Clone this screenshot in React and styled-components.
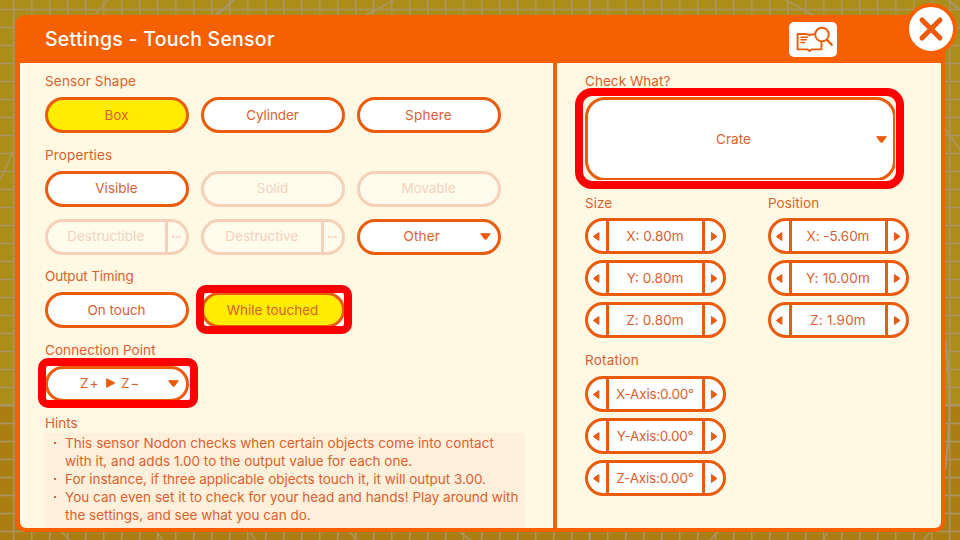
import React from "react";
import styled, { createGlobalStyle, css } from "styled-components";

const C = {
  orange: "#f76000",
  line: "#ea5b0c",
  text: "#dc602e",
  cream: "#fff9e3",
  yellow: "#ffec00",
  faint: "#f7d0b8",
  red: "#ff0000",
};

const GlobalStyle = createGlobalStyle`
  * { box-sizing: border-box; }
  body { margin: 0; overflow: hidden; }
`;

const Screen = styled.main`
  position: relative;
  width: 960px;
  height: 540px;
  padding: 15px 15px 8px;
  overflow: hidden;
  font: 400 13.5px/20px Inter, sans-serif;
  color: ${C.text};
  background: linear-gradient(#ab8e1a 0 405px, #ab7e14 405px);
`;

const GridArt = styled.svg`
  position: absolute;
  inset: 0;
`;

const Panel = styled.section`
  position: relative;
  display: flex;
  flex-direction: column;
  width: 930px;
  height: 517px;
  padding: 0 4.5px 4px;
  border-radius: 10px;
  background: ${C.orange};
`;

const Header = styled.header`
  display: flex;
  align-items: center;
  justify-content: space-between;
  height: 48px;
  padding: 0 103.5px 0 25.5px;
`;

const Title = styled.h1`
  margin: 0;
  font-size: 19.5px;
  font-weight: 450;
  letter-spacing: 0.25px;
  color: #fff;
`;

const GuideButton = styled.button`
  display: block;
  width: 48px;
  height: 35px;
  padding: 0;
  border: 0;
  border-radius: 5px;
  background: #fff;
`;

const CloseButton = styled.button`
  position: absolute;
  top: -12px;
  right: -12px;
  display: grid;
  place-items: center;
  width: 52px;
  height: 52px;
  padding: 0;
  border: 4px solid ${C.orange};
  border-radius: 50%;
  background: #fff;
`;

const Body = styled.div`
  display: grid;
  grid-template-columns: 533.5px 1fr;
  column-gap: 4px;
  flex: 1;
  border-radius: 0 0 6px 6px;
  overflow: hidden;
`;

const Column = styled.div`
  display: flex;
  flex-direction: column;
  padding: 8px 0 0 ${(p) => p.$inset}px;
  background: ${C.cream};
`;

const Section = styled.section`
  flex: none;
  width: ${(p) => (p.$width ? `${p.$width}px` : "auto")};
  height: ${(p) => (p.$height ? `${p.$height}px` : "auto")};
`;

const Heading = styled.h2`
  margin: 0;
  height: ${(p) => p.$height || 26}px;
  font-size: inherit;
  font-weight: 400;
  line-height: 20px;
  white-space: nowrap;
  letter-spacing: ${(p) => p.$track || 0}px;
`;

const Options = styled.div`
  display: grid;
  grid-template-columns: repeat(3, 144px);
  grid-auto-rows: 36px;
  gap: 12px;
`;

const tone = css`
  color: ${(p) => (p.$disabled ? C.faint : C.text)};
  background: ${(p) => (p.$disabled ? "#fffcee" : p.$selected ? C.yellow : "#fff")};
  border: 3px solid ${(p) => (p.$disabled ? C.faint : C.line)};
`;

const Pill = styled.button`
  ${tone}
  display: flex;
  align-items: center;
  width: 100%;
  height: ${(p) => (p.$tall ? 84 : 36)}px;
  padding: 0;
  border-radius: ${(p) => (p.$tall ? 20 : 18)}px;
  font: inherit;
  letter-spacing: ${(p) => p.$track || 0}px;
  white-space: nowrap;
`;

const PillText = styled.span`
  flex: 1;
  display: flex;
  align-items: center;
  justify-content: center;
  gap: 6px;
  padding: 0 ${(p) => (p.$inset ? 0 : 1)}px 1px ${(p) => p.$inset || 0}px;
`;

const CaretSlot = styled.span`
  display: flex;
  flex: none;
  width: ${(p) => p.$width}px;
`;

const MoreSlot = styled.span`
  display: grid;
  place-items: center;
  flex: none;
  align-self: stretch;
  width: 21.5px;
  border-left: 3px solid ${C.faint};
`;

const Highlight = styled.div`
  position: relative;
  isolation: isolate;
  width: ${(p) => p.$width}px;

  &::before,
  &::after {
    content: "";
    position: absolute;
    inset: ${(p) => p.$offset};
    border-radius: ${(p) => p.$radius}px;
  }
  &::before {
    z-index: -1;
    background: ${(p) => (p.$large ? C.cream : "#fff")};
  }
  &::after {
    border: 8px solid ${C.red};
    box-shadow: ${(p) => (p.$large ? "inset 0 0 0 1px #fff" : "none")};
  }
`;

const HintList = styled.ul`
  width: 480px;
  height: 95px;
  margin: 0;
  padding: 1px 0 0 20px;
  list-style: none;
  line-height: 18px;
  background: #fff0dc;
`;

const Hint = styled.li`
  display: flex;
  flex-direction: column;
  position: relative;

  &::before {
    content: "";
    position: absolute;
    left: -11px;
    top: 8px;
    width: 2px;
    height: 2px;
    background: ${C.text};
  }
`;

const HintLine = styled.span`
  white-space: nowrap;
  letter-spacing: ${(p) => p.$track || 0}px;
`;

const Vectors = styled.div`
  display: flex;
  gap: 42px;
  margin-bottom: 12px;
`;

const Stack = styled.div`
  display: grid;
  gap: 6px;
`;

const StepperFrame = styled.div`
  ${tone}
  display: grid;
  grid-template-columns: 18px 99px 18px;
  align-items: stretch;
  width: 141px;
  height: 36px;
  border-radius: 18px;
`;

const StepButton = styled.button`
  display: grid;
  place-items: center;
  padding: 0;
  border: 0;
  background: none;
`;

const StepValue = styled.span`
  display: grid;
  place-items: center;
  padding-right: 1px;
  border: solid ${C.line};
  border-width: 0 3px;
  letter-spacing: ${(p) => p.$track || 0}px;
  white-space: nowrap;
`;

const Shape = styled.svg`
  display: block;
  flex: none;
  overflow: visible;
`;

const Caret = () => (
  <Shape width="11" height="7" fill={C.line} stroke={C.line} strokeWidth="1" strokeLinejoin="round">
    <path d="M.7.7h9.6L6.2 6.3H4.8z" />
  </Shape>
);

const Play = () => (
  <Shape width="9" height="10" fill={C.line} stroke={C.line} strokeLinejoin="round">
    <path d="M.7.8v8.4L8.3 5.3v-.6z" />
  </Shape>
);

const Arrow = ({ next }) => (
  <Shape width="6" height="9" fill={C.line} stroke={C.line} strokeLinejoin="round">
    <path d={next ? "M.4.5v8L5.5 4.9v-.8z" : "M4.9.5v8L-.2 4.9v-.8z"} />
  </Shape>
);

const Dots = () => (
  <Shape width="9" height="2" fill={C.faint}>
    <path d="M0 0h2v2H0zM3.3 0h2v2h-2zM6.6 0h2v2h-2z" />
  </Shape>
);

const Choice = ({ children, more, caret, inset, ...rest }) => (
  <Pill {...rest}>
    <PillText $inset={inset}>{children}</PillText>
    {more && <MoreSlot><Dots /></MoreSlot>}
    {caret && <CaretSlot $width={caret}><Caret /></CaretSlot>}
  </Pill>
);

const Stepper = ({ value, track }) => (
  <StepperFrame>
    <StepButton aria-label="Decrease"><Arrow /></StepButton>
    <StepValue $track={track}>{value}</StepValue>
    <StepButton aria-label="Increase"><Arrow next /></StepButton>
  </StepperFrame>
);

const VectorGroup = ({ label, track, items, head = 25 }) => (
  <Section $width={141}>
    <Heading $track={track} $height={head}>{label}</Heading>
    <Stack>
      {items.map(([value, t]) => <Stepper key={value} value={value} track={t} />)}
    </Stack>
  </Section>
);

const size = [["X: 0.80m", 0], ["Y: 0.80m", 0], ["Z: 0.80m", 0.1]];
const position = [["X: -5.60m", -0.05], ["Y: 10.00m", 0.2], ["Z: 1.90m", 0.2]];
const rotation = [["X-Axis:0.00°", -0.2], ["Y-Axis:0.00°", -0.25], ["Z-Axis:0.00°", -0.18]];

const range = (start, end) => {
  const out = [];
  for (let v = start; v < end; v += 18) out.push(v);
  return out;
};

const Backdrop = () => (
  <GridArt width="960" height="540" fill="none" stroke="#aa9565" strokeWidth="1.5">
    {range(13.7, 960).map((x) => <path key={x} d={`M${x} 0V540`} />)}
    {range(9.4, 540).map((y) => <path key={y} d={`M0 ${y}H960`} />)}
    <path strokeWidth="2.4" d="M0 405.3H960M589.7 0V540M216 15L234 0M945 -3L962 12M945 340Q954 400 945 470" />
    <path d="M95 15L108 0M366 15L394 0M786 0L813 15M945 129L960 150M0 180L13 152M62 532L70 541M157 532L163 541M250 532L256 541M350 532L357 541M459 532L472 541M709 541L718 532M823 541L828 532M923 541L930 532" />
  </GridArt>
);

export default function App() {
  return (
    <Screen>
      <GlobalStyle />
      <Backdrop />
      <Panel>
        <Header>
          <Title>Settings - Touch Sensor</Title>
          <GuideButton aria-label="Guide">
            <Shape width="48" height="35" fill="none" stroke={C.line} strokeWidth="1.9" strokeLinejoin="round" strokeLinecap="round">
              <path d="M25.6 12.2c-2.1-.1-4 .3-5 1.2-1-1-2.6-1.4-4.8-1.4H8.6v15.4H18.6l2 1.6 2-1.6h9.8V20.5" />
              <path d="M12 15.2h6.4M12 17.8h5.4M12 20.4h3.6" strokeWidth="1.5" />
              <circle cx="33" cy="12.6" r="6.8" />
              <path d="M38 17.8l4.7 5" strokeWidth="2.3" />
            </Shape>
          </GuideButton>
        </Header>
        <Body>
          <Column $inset={25.5}>
            <Section $height={73.5}>
              <Heading $track={0.18}>Sensor Shape</Heading>
              <Options>
                <Choice $selected>Box</Choice>
                <Choice $track={-0.1}>Cylinder</Choice>
                <Choice $track={0.25}>Sphere</Choice>
              </Options>
            </Section>
            <Section $height={121.5}>
              <Heading $track={0.15}>Properties</Heading>
              <Options>
                <Choice>Visible</Choice>
                <Choice $disabled>Solid</Choice>
                <Choice $disabled $track={-0.1}>Movable</Choice>
                <Choice $disabled more>Destructible</Choice>
                <Choice $disabled more>Destructive</Choice>
                <Choice caret={18.5} inset={4} $track={0.15}>Other</Choice>
              </Options>
            </Section>
            <Section $height={73.5}>
              <Heading $track={-0.15}>Output Timing</Heading>
              <Options>
                <Choice>On touch</Choice>
                <Highlight $width={144} $offset="-7px -7px -6px -5px" $radius={10}>
                  <Choice $selected>While touched</Choice>
                </Highlight>
              </Options>
            </Section>
            <Section $height={73.5}>
              <Heading $track={0.08}>Connection Point</Heading>
              <Highlight $width={144} $offset="-7.5px -9px -6.5px -7px" $radius={10}>
                <Choice caret={18} inset={5} $track={1.5}>Z+ <Play /> Z−</Choice>
              </Highlight>
            </Section>
            <Section>
              <Heading $height={20}>Hints</Heading>
              <HintList>
                <Hint>
                  <HintLine $track={0.05}>This sensor Nodon checks when certain objects come into contact</HintLine>
                  <HintLine $track={0.02}>with it, and adds 1.00 to the output value for each one.</HintLine>
                </Hint>
                <Hint>
                  <HintLine $track={-0.03}>For instance, if three applicable objects touch it, it will output 3.00.</HintLine>
                </Hint>
                <Hint>
                  <HintLine $track={0.01}>You can even set it to check for your head and hands! Play around with</HintLine>
                  <HintLine>the settings, and see what you can do.</HintLine>
                </Hint>
              </HintList>
            </Section>
          </Column>
          <Column $inset={28}>
            <Section $height={122}>
              <Heading $track={0.05}>Check What?</Heading>
              <Highlight $large $width={311} $offset="-9px -8px -8px -10px" $radius={17}>
                <Choice $tall caret={17.5} inset={3.5} $track={0.08}>Crate</Choice>
              </Highlight>
            </Section>
            <Vectors>
              <VectorGroup label="Size" track={0} items={size} />
              <VectorGroup label="Position" track={0.05} items={position} />
            </Vectors>
            <VectorGroup label="Rotation" track={0.2} items={rotation} head={26} />
          </Column>
        </Body>
        <CloseButton aria-label="Close">
          <Shape width="24" height="24" stroke={C.line} strokeWidth="5" strokeLinecap="round">
            <path d="M3 3l18 18M21 3L3 21" />
          </Shape>
        </CloseButton>
      </Panel>
    </Screen>
  );
}
